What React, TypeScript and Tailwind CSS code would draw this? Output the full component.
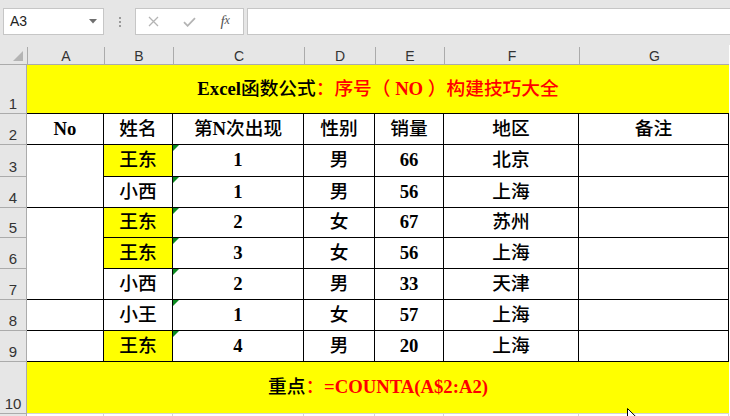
import React from 'react';

const COLS = ['A', 'B', 'C', 'D', 'E', 'F', 'G'];
const HEAD = ['No', '姓名', '第N次出现', '性别', '销量', '地区', '备注'];

// row number, name, yellow?, nth, sex, sales, region
const ROWS: [number, string, boolean, string, string, string, string][] = [
  [3, '王东', true, '1', '男', '66', '北京'],
  [4, '小西', false, '1', '男', '56', '上海'],
  [5, '王东', true, '2', '女', '67', '苏州'],
  [6, '王东', true, '3', '女', '56', '上海'],
  [7, '小西', false, '2', '男', '33', '天津'],
  [8, '小王', false, '1', '女', '57', '上海'],
  [9, '王东', true, '4', '男', '20', '上海'],
];

// merged cells in column A
const A_SPAN: Record<number, string> = { 3: 'row-span-2', 5: 'row-span-3', 8: '', 9: '' };

const serif = "font-['Liberation_Serif','Noto_Sans_CJK_SC',serif] font-bold text-[18.7px] leading-none text-black";
const ui = "font-['Liberation_Sans','Noto_Sans',sans-serif]";

// CJK glyphs come out heavier than the sheet's faux-bold SimSun, so thin them a bit
const T: React.FC<{ s: string }> = ({ s }) => (
  <>
    {s.split(/([\u3000-\u9fff\uff00-\uffef]+)/).filter(Boolean).map((part, i) =>
      /[\u3000-\u9fff\uff00-\uffef]/.test(part)
        ? <span key={i} className="font-medium">{part}</span>
        : <span key={i}>{part}</span>
    )}
  </>
);

const RowHead: React.FC<{ n?: number }> = ({ n }) => (
  <div className={`${ui} bg-[#e6e6e6] border-r border-b border-[#ababab] flex items-end justify-center pb-[2px] text-[15px] leading-none text-[#333]`}>
    {n}
  </div>
);

const Cell: React.FC<{ text?: string; yellow?: boolean; tri?: boolean; className?: string }> = ({
  text, yellow, tri, className = ''
}) => (
  <div className={`relative flex items-center justify-center border-r border-b border-black ${yellow ? 'bg-[#ffff00]' : 'bg-white'} ${serif} ${className}`}>
    {tri && (
      <svg className="absolute left-0 top-0" width="6" height="6" viewBox="0 0 6 6">
        <path d="M0 0H6L0 6Z" fill="#0a8a1f" />
      </svg>
    )}
    {text && <T s={text} />}
  </div>
);

export default function App() {
  return (
    <div className="relative w-[730px] h-[416px] overflow-hidden bg-white">
      {/* Formula bar */}
      <div className="h-[45px] bg-[#e6e6e6] flex items-start pt-[8px]">
        <div className="ml-[3px] w-[101px] h-[27px] bg-white border border-[#c6c6c6] flex items-center justify-between pl-[6px] pr-[6px]">
          <span className={`${ui} text-[14px] text-[#222]`}>A3</span>
          <svg width="8" height="5" viewBox="0 0 8 5">
            <path d="M0 0H8L4 4.5Z" fill="#6f6f6f" />
          </svg>
        </div>
        <div className="w-[31px] h-[27px] flex flex-col items-center justify-center gap-[2px]">
          <span className="w-[2px] h-[2px] bg-[#9a9a9a]" />
          <span className="w-[2px] h-[2px] bg-[#9a9a9a]" />
          <span className="w-[2px] h-[2px] bg-[#9a9a9a]" />
        </div>
        <div className="w-[109px] h-[27px] bg-white border border-[#c6c6c6] flex items-center">
          <span className="w-[36px] flex justify-center">
            <svg width="11" height="11" viewBox="0 0 11 11">
              <path d="M1 1L10 10M10 1L1 10" stroke="#b4b4b4" strokeWidth="1.3" />
            </svg>
          </span>
          <span className="w-[36px] flex justify-center">
            <svg width="13" height="10" viewBox="0 0 13 10">
              <path d="M1 5.2L4.6 8.8L12 1.2" stroke="#b4b4b4" strokeWidth="1.8" fill="none" />
            </svg>
          </span>
          <span className="w-[36px] flex justify-center font-['Liberation_Serif',serif] italic text-[15px] leading-none text-[#555]">
            f<span className="text-[12px]">x</span>
          </span>
        </div>
        <div className="ml-[3px] flex-1 h-[27px] bg-white border border-[#c6c6c6] border-r-0" />
      </div>

      {/* Sheet */}
      <div className="grid grid-cols-[27px_77px_69px_131px_71px_69px_135px_150px] grid-rows-[20px_49px_31px_32px_31px_30px_31px_31px_31px_31px_52px_2px]">
        {/* column headers */}
        <div className="bg-[#e6e6e6] border-b border-[#ababab] flex items-end justify-end pr-[4px] pb-[3px]">
          <svg width="10" height="10" viewBox="0 0 10 10">
            <path d="M10 0V10H0Z" fill="#b4b4b4" />
          </svg>
        </div>
        {COLS.map(c => (
          <div key={c} className="bg-[#e6e6e6] border-b border-[#ababab] flex flex-col">
            <div className={`${ui} mt-[2px] flex-1 border-l border-[#ababab] flex items-center justify-center pt-[1px] text-[14px] leading-none text-[#333]`}>
              {c}
            </div>
          </div>
        ))}

        {/* row 1 */}
        <RowHead n={1} />
        <div className={`col-span-7 bg-[#ffff00] border-b border-black flex items-center justify-center ${serif}`}>
          <T s="Excel函数公式" />
          <span className="text-[#ff0000]"><T s="：序号（ NO ）构建技巧大全" /></span>
        </div>

        {/* row 2 */}
        <RowHead n={2} />
        {HEAD.map(h => (
          <Cell key={h} text={h} />
        ))}

        {/* data rows */}
        {ROWS.map(([n, name, y, nth, sex, sales, region]) => (
          <React.Fragment key={n}>
            <RowHead n={n} />
            {n in A_SPAN && <Cell className={A_SPAN[n]} />}
            <Cell yellow={y} text={name} />
            <Cell tri text={nth} />
            <Cell text={sex} />
            <Cell text={sales} />
            <Cell text={region} />
            <Cell />
          </React.Fragment>
        ))}

        {/* row 10 */}
        <RowHead n={10} />
        <div className={`col-span-7 bg-[#ffff00] border-b border-[#d4d4d4] flex items-center justify-center ${serif}`}>
          <T s="重点" />
          <span className="text-[#ff0000]"><T s="：=COUNTA(A$2:A2)" /></span>
        </div>

        {/* row 11 (cut off) */}
        <RowHead />
        {COLS.map(c => (
          <div key={c} className="border-r border-[#d4d4d4]" />
        ))}
      </div>

      {/* mouse pointer */}
      <svg className="absolute left-[627px] top-[408px]" width="12" height="18" viewBox="0 0 12 18">
        <path d="M0.5 0.5V15L4 11.6L6.5 17L8.6 16L6.2 10.8H11Z" fill="#fff" stroke="#000" strokeWidth="1" />
      </svg>
    </div>
  );
}
